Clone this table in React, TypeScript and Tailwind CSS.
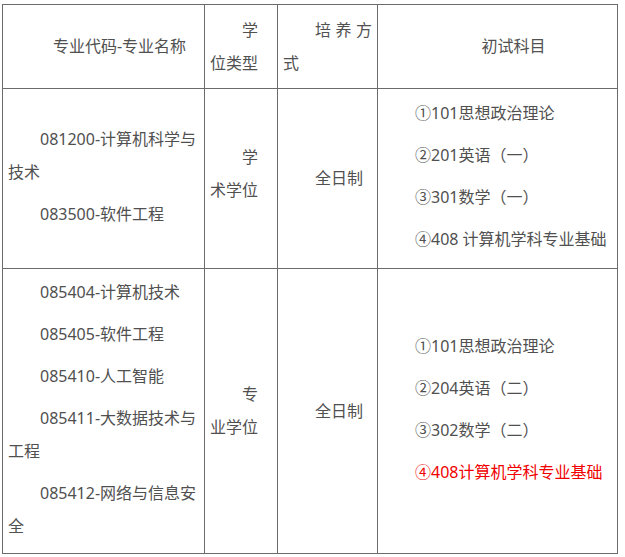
const rows = [
  {
    majors: ["081200-计算机科学与技术", "083500-软件工程"],
    degree: "学术学位",
    mode: "全日制",
    subjects: ["①101思想政治理论", "②201英语（一）", "③301数学（一）", "④408 计算机学科专业基础"],
    red: false,
  },
  {
    majors: [
      "085404-计算机技术",
      "085405-软件工程",
      "085410-人工智能",
      "085411-大数据技术与工程",
      "085412-网络与信息安全",
    ],
    degree: "专业学位",
    mode: "全日制",
    subjects: ["①101思想政治理论", "②204英语（二）", "③302数学（二）", "④408计算机学科专业基础"],
    red: true,
  },
];

const cell = "border border-[#6b6b6b] px-[5px] align-middle";

export default function App() {
  return (
    <div
      className="min-h-[557px] w-[625px] bg-white pt-[4px] pl-[2px] text-[16px] leading-[33px] text-[#505050]"
      style={{ fontFamily: '"Noto Sans", "Noto Sans CJK SC", sans-serif' }}
    >
      <table className="w-[616px] table-fixed border-collapse">
        <colgroup>
          <col className="w-[202px]" />
          <col className="w-[73px]" />
          <col className="w-[100px]" />
          <col className="w-[240px]" />
        </colgroup>
        <tbody>
          <tr className="h-[84px]">
            <td className={cell}>
              <p className="indent-8 text-center">专业代码-专业名称</p>
            </td>
            <td className={cell}>
              <p className="indent-8 text-justify">学位类型</p>
            </td>
            <td className={cell}>
              <p className="indent-8 text-justify">培养方式</p>
            </td>
            <td className={cell}>
              <p className="indent-8 text-center">初试科目</p>
            </td>
          </tr>
          {rows.map((row, i) => (
            <tr key={i} className={i === 0 ? "h-[180px]" : "h-[285px]"}>
              <td className={cell}>
                {row.majors.map((m) => (
                  <p key={m} className="mb-[9px] indent-8 last:mb-[4px]">
                    {m}
                  </p>
                ))}
              </td>
              <td className={cell}>
                <p className={`indent-8 ${i === 0 ? "mb-[9px]" : ""}`}>{row.degree}</p>
              </td>
              <td className={cell}>
                <p className="indent-8">{row.mode}</p>
              </td>
              <td className={cell}>
                {row.subjects.map((s, j) => (
                  <p
                    key={s}
                    className={`mb-[9px] indent-8 last:mb-[4px] ${row.red && j === 3 ? "text-[#f00000]" : ""}`}
                  >
                    {s}
                  </p>
                ))}
              </td>
            </tr>
          ))}
        </tbody>
      </table>
    </div>
  );
}
